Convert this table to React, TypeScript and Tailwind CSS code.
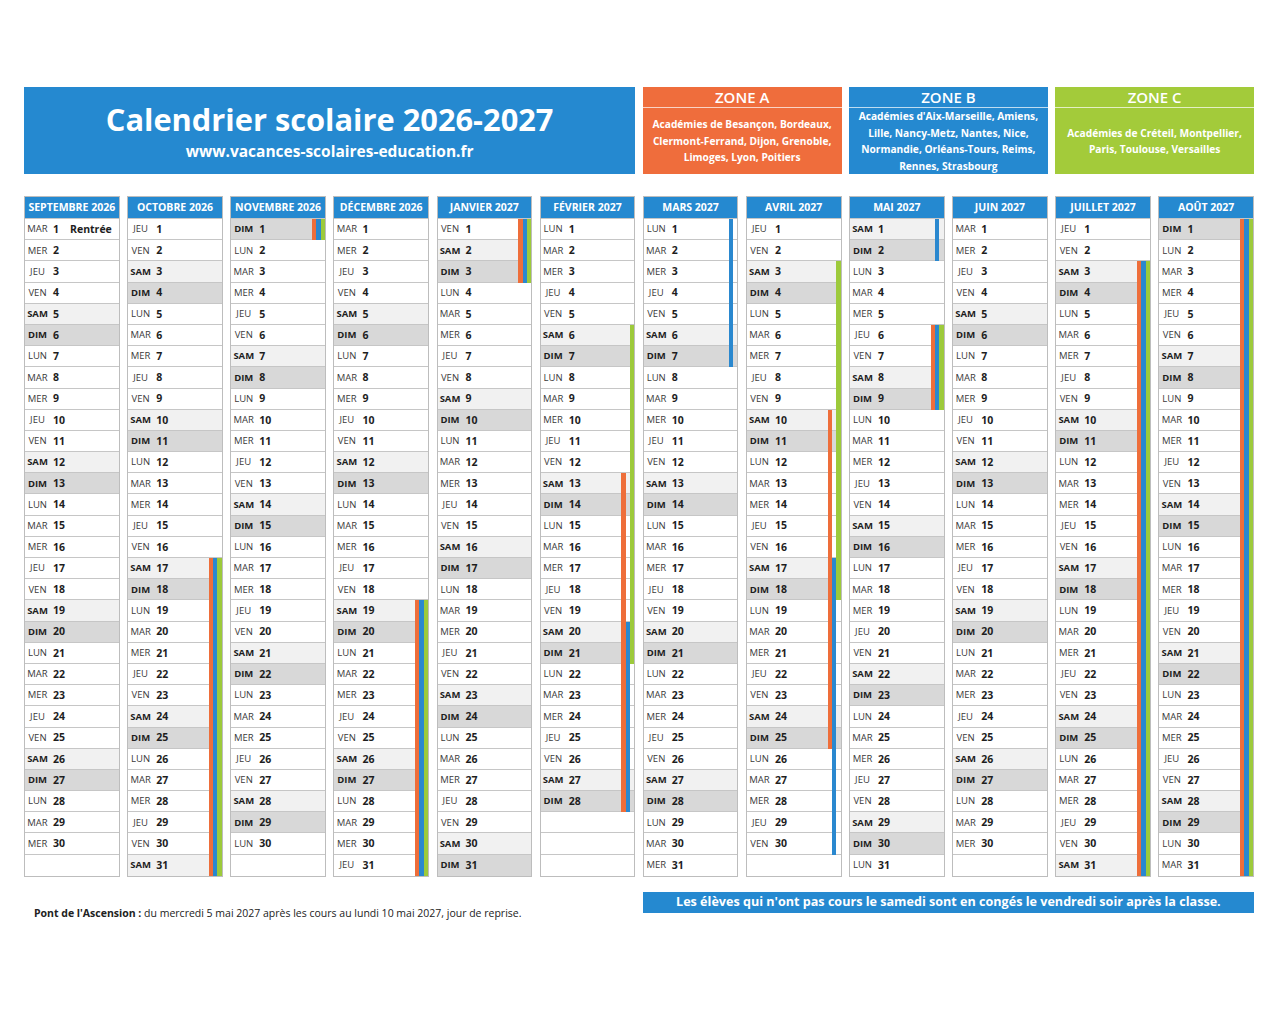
import React from "react";

const DAY = ["DIM", "LUN", "MAR", "MER", "JEU", "VEN", "SAM"];

const MONTHS = [
  { name: "SEPTEMBRE 2026", y: 2026, m: 8 },
  { name: "OCTOBRE 2026", y: 2026, m: 9 },
  { name: "NOVEMBRE 2026", y: 2026, m: 10 },
  { name: "DÉCEMBRE 2026", y: 2026, m: 11 },
  { name: "JANVIER 2027", y: 2027, m: 0 },
  { name: "FÉVRIER 2027", y: 2027, m: 1 },
  { name: "MARS 2027", y: 2027, m: 2 },
  { name: "AVRIL 2027", y: 2027, m: 3 },
  { name: "MAI 2027", y: 2027, m: 4 },
  { name: "JUIN 2027", y: 2027, m: 5 },
  { name: "JUILLET 2027", y: 2027, m: 6 },
  { name: "AOÛT 2027", y: 2027, m: 7 },
];

type Zone = "A" | "B" | "C";
const VAC: [number, number, Zone[]][] = [
  [20261017, 20261101, ["A", "B", "C"]],
  [20261219, 20270103, ["A", "B", "C"]],
  [20270206, 20270221, ["C"]],
  [20270213, 20270228, ["A"]],
  [20270220, 20270307, ["B"]],
  [20270403, 20270418, ["C"]],
  [20270410, 20270425, ["A"]],
  [20270417, 20270502, ["B"]],
  [20270506, 20270509, ["A", "B", "C"]],
  [20270703, 20270831, ["A", "B", "C"]],
];

function inVac(key: number, z: Zone) {
  return VAC.some(([s, e, zs]) => key >= s && key <= e && zs.includes(z));
}

const SLOT_ON: Record<Zone, string> = {
  A: "w-[4.3px] bg-[#ee6e3a]",
  B: "w-[4.3px] bg-[#2a88cf]",
  C: "w-[4.3px] bg-[#9dca3b]",
};

function Row({ y, m, d, last }: { y: number; m: number; d: number; last: boolean }) {
  const dim = new Date(y, m + 1, 0).getDate();
  const exists = d <= dim;
  const dow = exists ? new Date(y, m, d).getDay() : -1;
  const bg = dow === 6 ? "bg-[#f1f1f1]" : dow === 0 ? "bg-[#d8d8d8]" : "bg-white";
  const key = y * 10000 + (m + 1) * 100 + d;
  const weekend = dow === 0 || dow === 6;
  const border = last ? "" : "border-b border-[#c6c6c6]";
  return (
    <div className={`flex h-[21.2px] ${bg}`}>
      <div className={`flex flex-1 items-center ${border}`}>
        {exists && (
          <>
            <span
              className={
                weekend
                  ? "w-[25px] text-center text-[9.5px] font-bold leading-none text-[#1e1e1e]"
                  : "w-[25px] text-center text-[9.5px] leading-none text-[#3a3a3a]"
              }
            >
              {DAY[dow]}
            </span>
            <span className="ml-[3px] text-[10.5px] font-bold leading-none text-[#1e1e1e]">{d}</span>
            {y === 2026 && m === 8 && d === 1 && (
              <span className="ml-[11px] text-[10.5px] font-bold leading-none text-[#1e1e1e]">Rentrée</span>
            )}
          </>
        )}
      </div>
      {(["A", "B", "C"] as Zone[]).map((z) =>
        exists && inVac(key, z) ? (
          <div key={z} className={SLOT_ON[z]} />
        ) : (
          <div key={z} className={`w-[4.3px] ${border}`} />
        )
      )}
    </div>
  );
}

function Month({ name, y, m }: { name: string; y: number; m: number }) {
  const days = Array.from({ length: 31 }, (_, i) => i + 1);
  return (
    <div className="flex flex-col border border-[#bdbdbd]">
      <div className="flex h-[22px] items-center justify-center border-b border-[#c6c6c6] bg-[#2589d0] text-[10.5px] font-bold text-white">
        {name}
      </div>
      {days.map((d) => (
        <Row key={d} y={y} m={m} d={d} last={d === 31} />
      ))}
    </div>
  );
}

function ZoneBox({ title, head, body, lines }: { title: string; head: string; body: string; lines: string[] }) {
  return (
    <div className="col-span-2 flex flex-col">
      <div className={`flex h-[21px] items-center justify-center border-b border-white/70 text-[15px] font-semibold text-white ${head}`}>
        {title}
      </div>
      <div className={`flex flex-1 items-center justify-center text-center text-[10.2px] font-bold leading-[16.5px] text-white ${body}`}>
        <div className="whitespace-nowrap">
          {lines.map((l, i) => (
            <div key={i}>{l}</div>
          ))}
        </div>
      </div>
    </div>
  );
}

export default function App() {
  return (
    <div className="min-h-[1024px] w-[1280px] bg-white pl-[24px] pr-[26px] pt-[87px] font-['Open_Sans','Noto_Sans',sans-serif]">
      <div className="grid h-[86px] grid-cols-12 gap-x-[7.5px]">
        <div className="col-span-6 flex flex-col items-center justify-center bg-[#2589d0] text-white">
          <div className="text-[30.8px] font-bold leading-[36px]">Calendrier scolaire 2026-2027</div>
          <div className="mt-[4px] text-[15.5px] font-bold leading-[20px]">www.vacances-scolaires-education.fr</div>
        </div>
        <ZoneBox
          title="ZONE A"
          head="bg-[#ef6d3c]"
          body="bg-[#ef6d3c]"
          lines={["Académies de Besançon, Bordeaux,", "Clermont-Ferrand, Dijon, Grenoble,", "Limoges, Lyon, Poitiers"]}
        />
        <ZoneBox
          title="ZONE B"
          head="bg-[#2589d0]"
          body="bg-[#2589d0]"
          lines={["Académies d'Aix-Marseille, Amiens,", "Lille, Nancy-Metz, Nantes, Nice,", "Normandie, Orléans-Tours, Reims,", "Rennes, Strasbourg"]}
        />
        <ZoneBox
          title="ZONE C"
          head="bg-[#a3cb3a]"
          body="bg-[#a3cb3a]"
          lines={["Académies de Créteil, Montpellier,", "Paris, Toulouse, Versailles"]}
        />
      </div>

      <div className="mt-[23px] grid grid-cols-12 gap-x-[7.5px]">
        {MONTHS.map((mo) => (
          <Month key={mo.name} {...mo} />
        ))}
      </div>

      <div className="mt-[15px] grid grid-cols-12 gap-x-[7.5px]">
        <div className="col-span-6 whitespace-nowrap pl-[10px] pt-[14px] text-[10.5px] leading-[14px] text-[#222]">
          <span className="font-bold">Pont de l'Ascension :</span> du mercredi 5 mai 2027 après les cours au lundi 10 mai 2027, jour de reprise.
        </div>
        <div className="col-span-6 flex h-[21px] items-center justify-center whitespace-nowrap bg-[#2589d0] text-[12.6px] font-bold text-white">
          Les élèves qui n'ont pas cours le samedi sont en congés le vendredi soir après la classe.
        </div>
      </div>
    </div>
  );
}
